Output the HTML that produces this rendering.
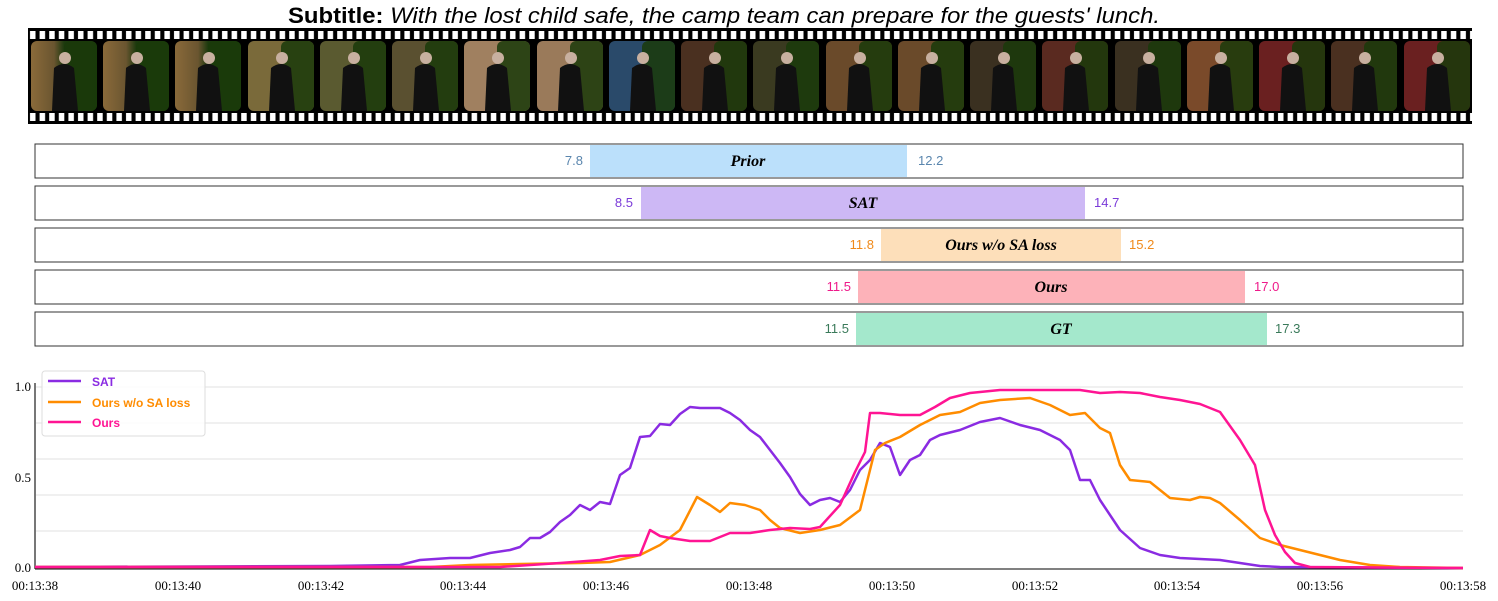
<!DOCTYPE html><html><head><meta charset="utf-8"><style>
body{margin:0;background:#fff;width:1498px;height:601px;overflow:hidden;font-family:"Liberation Sans",sans-serif}
</style></head><body>
<svg width="1498" height="601" xmlns="http://www.w3.org/2000/svg" style="position:absolute;left:0;top:0">
<defs>
<pattern id="sp" x="28" y="0" width="9.6" height="601" patternUnits="userSpaceOnUse"><rect x="2" y="0" width="5.5" height="601" fill="#fff"/></pattern>
<linearGradient id="fr" x1="0" y1="0" x2="1" y2="0"><stop offset="0" stop-color="#8a6a3a"/><stop offset="0.35" stop-color="#6a5530"/><stop offset="0.5" stop-color="#1d3a0e"/><stop offset="1" stop-color="#1a3a0a"/></linearGradient>
</defs>
<text x="288" y="23" textLength="872" lengthAdjust="spacingAndGlyphs" font-size="22" font-family="Liberation Sans,sans-serif"><tspan font-weight="bold">Subtitle:</tspan> <tspan font-style="italic">With the lost child safe, the camp team can prepare for the guests' lunch.</tspan></text>
<rect x="28" y="28" width="1444" height="96" fill="#000"/>
<rect x="28" y="31" width="1444" height="8" fill="url(#sp)"/>
<rect x="28" y="113" width="1444" height="8" fill="url(#sp)"/>
<g>
<rect x="31" y="41" width="66" height="70" rx="6" fill="url(#fr)"/><rect x="103" y="41" width="66" height="70" rx="6" fill="url(#fr)"/><rect x="175" y="41" width="66" height="70" rx="6" fill="url(#fr)"/><rect x="248" y="41" width="66" height="70" rx="6" fill="#7a6a3a"/><rect x="320" y="41" width="66" height="70" rx="6" fill="#5a5a30"/><rect x="392" y="41" width="66" height="70" rx="6" fill="#5a5030"/><rect x="464" y="41" width="66" height="70" rx="6" fill="#a08060"/><rect x="537" y="41" width="66" height="70" rx="6" fill="#9a7a5a"/><rect x="609" y="41" width="66" height="70" rx="6" fill="#2a4a6a"/><rect x="681" y="41" width="66" height="70" rx="6" fill="#4a3020"/><rect x="753" y="41" width="66" height="70" rx="6" fill="#3a3a20"/><rect x="826" y="41" width="66" height="70" rx="6" fill="#6a4a2a"/><rect x="898" y="41" width="66" height="70" rx="6" fill="#6a4a2a"/><rect x="970" y="41" width="66" height="70" rx="6" fill="#3a3020"/><rect x="1042" y="41" width="66" height="70" rx="6" fill="#5a2a20"/><rect x="1115" y="41" width="66" height="70" rx="6" fill="#3a3020"/><rect x="1187" y="41" width="66" height="70" rx="6" fill="#7a4a2a"/><rect x="1259" y="41" width="66" height="70" rx="6" fill="#6a2020"/><rect x="1331" y="41" width="66" height="70" rx="6" fill="#4a3020"/><rect x="1404" y="41" width="66" height="70" rx="6" fill="#6a2020"/>
</g>
<g fill="#1a3a0a" opacity="0.85">
<rect x="64" y="41" width="33" height="70" rx="6"/><rect x="136" y="41" width="33" height="70" rx="6"/><rect x="208" y="41" width="33" height="70" rx="6"/><rect x="281" y="41" width="33" height="70" rx="6"/><rect x="353" y="41" width="33" height="70" rx="6"/><rect x="425" y="41" width="33" height="70" rx="6"/><rect x="497" y="41" width="33" height="70" rx="6"/><rect x="570" y="41" width="33" height="70" rx="6"/><rect x="642" y="41" width="33" height="70" rx="6"/><rect x="714" y="41" width="33" height="70" rx="6"/><rect x="786" y="41" width="33" height="70" rx="6"/><rect x="859" y="41" width="33" height="70" rx="6"/><rect x="931" y="41" width="33" height="70" rx="6"/><rect x="1003" y="41" width="33" height="70" rx="6"/><rect x="1075" y="41" width="33" height="70" rx="6"/><rect x="1148" y="41" width="33" height="70" rx="6"/><rect x="1220" y="41" width="33" height="70" rx="6"/><rect x="1292" y="41" width="33" height="70" rx="6"/><rect x="1364" y="41" width="33" height="70" rx="6"/><rect x="1437" y="41" width="33" height="70" rx="6"/>
</g>
<g fill="#111">
<path d="M52 111 L54 68 Q64 60 74 68 L78 111 Z"/><path d="M124 111 L126 68 Q136 60 146 68 L150 111 Z"/><path d="M196 111 L198 68 Q208 60 218 68 L222 111 Z"/><path d="M269 111 L271 68 Q281 60 291 68 L295 111 Z"/><path d="M341 111 L343 68 Q353 60 363 68 L367 111 Z"/><path d="M413 111 L415 68 Q425 60 435 68 L439 111 Z"/><path d="M485 111 L487 68 Q497 60 507 68 L511 111 Z"/><path d="M558 111 L560 68 Q570 60 580 68 L584 111 Z"/><path d="M630 111 L632 68 Q642 60 652 68 L656 111 Z"/><path d="M702 111 L704 68 Q714 60 724 68 L728 111 Z"/><path d="M774 111 L776 68 Q786 60 796 68 L800 111 Z"/><path d="M847 111 L849 68 Q859 60 869 68 L873 111 Z"/><path d="M919 111 L921 68 Q931 60 941 68 L945 111 Z"/><path d="M991 111 L993 68 Q1003 60 1013 68 L1017 111 Z"/><path d="M1063 111 L1065 68 Q1075 60 1085 68 L1089 111 Z"/><path d="M1136 111 L1138 68 Q1148 60 1158 68 L1162 111 Z"/><path d="M1208 111 L1210 68 Q1220 60 1230 68 L1234 111 Z"/><path d="M1280 111 L1282 68 Q1292 60 1302 68 L1306 111 Z"/><path d="M1352 111 L1354 68 Q1364 60 1374 68 L1378 111 Z"/><path d="M1425 111 L1427 68 Q1437 60 1447 68 L1451 111 Z"/>
</g>
<g fill="#c8b0a0">
<circle cx="65" cy="58" r="6"/><circle cx="137" cy="58" r="6"/><circle cx="209" cy="58" r="6"/><circle cx="282" cy="58" r="6"/><circle cx="354" cy="58" r="6"/><circle cx="426" cy="58" r="6"/><circle cx="498" cy="58" r="6"/><circle cx="571" cy="58" r="6"/><circle cx="643" cy="58" r="6"/><circle cx="715" cy="58" r="6"/><circle cx="787" cy="58" r="6"/><circle cx="860" cy="58" r="6"/><circle cx="932" cy="58" r="6"/><circle cx="1004" cy="58" r="6"/><circle cx="1076" cy="58" r="6"/><circle cx="1149" cy="58" r="6"/><circle cx="1221" cy="58" r="6"/><circle cx="1293" cy="58" r="6"/><circle cx="1365" cy="58" r="6"/><circle cx="1438" cy="58" r="6"/>
</g>
<g font-family="Liberation Serif,serif" font-style="italic" font-weight="bold" font-size="16" text-anchor="middle">
<rect x="35" y="144" width="1428" height="34" fill="#fff" stroke="#333"/><rect x="590" y="145" width="317" height="32" fill="#bbe0fb"/><text x="748" y="166">Prior</text>
<rect x="35" y="186" width="1428" height="34" fill="#fff" stroke="#333"/><rect x="641" y="187" width="444" height="32" fill="#cdb8f5"/><text x="863" y="208">SAT</text>
<rect x="35" y="228" width="1428" height="34" fill="#fff" stroke="#333"/><rect x="881" y="229" width="240" height="32" fill="#fddfba"/><text x="1001" y="250">Ours w/o SA loss</text>
<rect x="35" y="270" width="1428" height="34" fill="#fff" stroke="#333"/><rect x="858" y="271" width="387" height="32" fill="#fdb2b9"/><text x="1051" y="292">Ours</text>
<rect x="35" y="312" width="1428" height="34" fill="#fff" stroke="#333"/><rect x="856" y="313" width="411" height="32" fill="#a4e8cc"/><text x="1061" y="334">GT</text>
</g>
<g font-family="Liberation Sans,sans-serif" font-size="13">
<text x="583" y="165" text-anchor="end" fill="#5a86ae">7.8</text><text x="918" y="165" fill="#5a86ae">12.2</text>
<text x="633" y="207" text-anchor="end" fill="#7a3ad8">8.5</text><text x="1094" y="207" fill="#7a3ad8">14.7</text>
<text x="874" y="249" text-anchor="end" fill="#f08a1a">11.8</text><text x="1129" y="249" fill="#f08a1a">15.2</text>
<text x="851" y="291" text-anchor="end" fill="#ee1a8a">11.5</text><text x="1254" y="291" fill="#ee1a8a">17.0</text>
<text x="849" y="333" text-anchor="end" fill="#3a7a5a">11.5</text><text x="1275" y="333" fill="#3a7a5a">17.3</text>
</g>
<g stroke="#e2e2e2" stroke-width="1">
<line x1="35" y1="387" x2="1463" y2="387"/><line x1="35" y1="423" x2="1463" y2="423"/><line x1="35" y1="459" x2="1463" y2="459"/><line x1="35" y1="495" x2="1463" y2="495"/><line x1="35" y1="531" x2="1463" y2="531"/>
</g>
<line x1="35" y1="383" x2="35" y2="569" stroke="#777" stroke-width="2"/>
<line x1="35" y1="569" x2="1463" y2="569" stroke="#000" stroke-width="1"/>
<g font-family="Liberation Serif,serif" font-size="13" fill="#000">
<text x="31" y="391" text-anchor="end">1.0</text><text x="31" y="482" text-anchor="end">0.5</text><text x="31" y="572" text-anchor="end">0.0</text>
<g text-anchor="middle"><text x="35" y="590">00:13:38</text><text x="178" y="590">00:13:40</text><text x="321" y="590">00:13:42</text><text x="463" y="590">00:13:44</text><text x="606" y="590">00:13:46</text><text x="749" y="590">00:13:48</text><text x="892" y="590">00:13:50</text><text x="1035" y="590">00:13:52</text><text x="1177" y="590">00:13:54</text><text x="1320" y="590">00:13:56</text><text x="1463" y="590">00:13:58</text></g>
</g>
<g fill="none" stroke-width="2.5" stroke-linejoin="round">
<polyline stroke="#8a2be2" points="35,567 330,566 400,565 420,560 450,558 470,558 490,553 510,550 520,547 530,538 540,538 550,532 560,522 570,515 580,505 590,510 600,502 610,504 620,475 630,468 640,437 650,436 660,424 670,425 680,414 690,407 700,408 720,408 730,413 740,420 750,430 760,437 770,450 780,463 790,477 800,494 810,505 820,500 830,498 840,502 850,490 860,470 870,460 880,443 890,447 900,475 910,460 920,455 930,440 940,435 960,430 980,422 1000,418 1020,425 1040,430 1060,440 1070,450 1080,480 1090,480 1100,500 1120,530 1140,548 1160,555 1180,558 1200,559 1220,560 1240,563 1260,566 1280,567 1463,568"/>
<polyline stroke="#ff8c00" points="35,567 430,567 470,565 520,564 580,563 610,562 640,555 660,545 680,530 697,497 710,505 720,512 730,503 745,505 760,510 770,520 780,528 800,533 820,530 840,525 860,510 875,450 885,443 900,437 920,425 940,415 960,412 980,403 1000,400 1030,398 1050,405 1070,415 1085,413 1100,428 1110,433 1120,465 1130,480 1150,482 1160,490 1170,498 1190,500 1200,497 1210,498 1220,503 1240,520 1260,538 1280,545 1300,550 1340,560 1370,565 1400,567 1463,568"/>
<polyline stroke="#ff1493" points="35,567 500,567 560,563 600,560 620,556 640,555 650,530 660,536 670,538 690,541 710,541 730,533 750,533 770,530 790,528 810,529 820,527 840,505 855,472 865,452 870,413 880,413 900,415 920,415 935,407 950,398 970,393 1000,390 1040,390 1080,390 1100,393 1120,392 1140,393 1160,397 1180,400 1200,404 1220,412 1240,440 1255,465 1265,510 1275,535 1285,552 1295,563 1310,567 1463,568"/>
</g>
<rect x="42" y="371" width="163" height="65" rx="3" fill="#fff" fill-opacity="0.85" stroke="#ddd"/>
<g stroke-width="2.5"><line x1="48" y1="381" x2="81" y2="381" stroke="#8a2be2"/><line x1="48" y1="402" x2="81" y2="402" stroke="#ff8c00"/><line x1="48" y1="422" x2="81" y2="422" stroke="#ff1493"/></g>
<g font-size="12" font-weight="bold"><text x="92" y="386" fill="#8a2be2">SAT</text><text x="92" y="407" fill="#ff8c00">Ours w/o SA loss</text><text x="92" y="427" fill="#ff1493">Ours</text></g>
</svg>
</body></html>
